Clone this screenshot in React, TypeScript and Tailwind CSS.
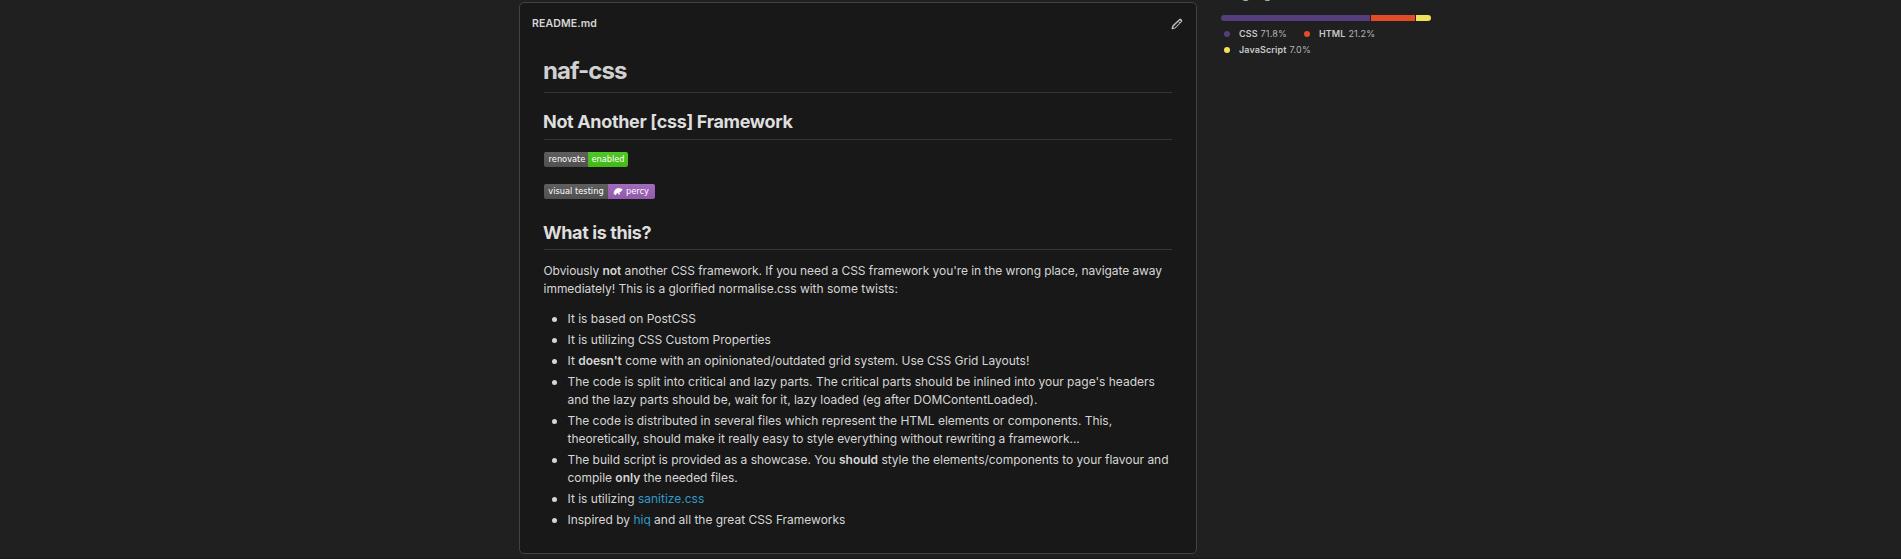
import type { ReactNode } from 'react';

function Heading({ children, className }: { children: ReactNode; className: string }) {
  return (
    <div className={`border-b border-[#353535] font-bold ${className}`}>
      <span className="-ml-px">{children}</span>
    </div>
  );
}

function Item({ children, className = '' }: { children: ReactNode; className?: string }) {
  return (
    <li className={`relative mb-[3px] whitespace-nowrap ${className}`}>
      <span className="absolute -left-[15.5px] top-[7px] size-[5px] rounded-full bg-[#d6d6d6]" />
      {children}
    </li>
  );
}

function Language({ name, share, dot }: { name: string; share: string; dot: string }) {
  return (
    <li className="flex h-4 items-center whitespace-nowrap">
      <span className={`mr-[9px] size-[6px] rounded-full ${dot}`} />
      <span className="font-semibold tracking-[0.09px] text-[#c9c9c9]">{name}</span>
      <span className="ml-[3px] tracking-[0.16px] text-[#b5b5b5]">{share}</span>
    </li>
  );
}

export default function App() {
  return (
    <div className="flex h-[559px] w-full overflow-hidden border-b border-[#191919] bg-[#202020] pl-[519px] font-[Inter,sans-serif] text-xs leading-[18px] text-[#d6d6d6]">
      <main className="mt-[2px] h-[552px] w-[678px] shrink-0 rounded-[5px] border border-[#424242] bg-[#181818]">
        <header className="flex h-[40px] items-center justify-between pl-[12px] pr-[13px]">
          <span className="pt-[2px] text-[10.5px] font-semibold tracking-[0.12px]">README.md</span>
          <svg className="mt-px size-3" viewBox="0 0 16 16" fill="#bdbdbd">
            <path d="M11.013 1.427a1.75 1.75 0 0 1 2.474 0l1.086 1.086a1.75 1.75 0 0 1 0 2.474l-8.61 8.61c-.21.21-.47.364-.756.445l-3.251.93a1 1 0 0 1-1.177-1.178l.929-3.25c.081-.286.235-.547.445-.758l8.86-8.36Zm.8 1.45L3.7 11l-.7 2.2 2.3-.7 8.1-8.2-1.587-1.423ZM9.6 3.5l2.9 2.9-.8.8-2.9-2.9Z" />
          </svg>
        </header>
        <article className="px-6">
          <Heading className="mt-[13px] h-[37px] text-2xl leading-[30px] tracking-[-0.95px] text-[#d0d0d0]">naf-css</Heading>
          <Heading className="mt-[18px] h-[29px] text-lg leading-[22px] tracking-[-0.34px] text-[#dedede]">Not Another [css] Framework</Heading>
          <div className="mt-3 flex h-[15px] w-[84px] overflow-hidden rounded-[2px] font-['DejaVu_Sans',sans-serif] text-[8.25px] leading-[15px] text-white">
            <span className="w-[44px] bg-linear-to-b from-[#5f5f5f] to-[#505050] pl-[2px] text-center">renovate</span>
            <span className="w-[40px] bg-linear-to-b from-[#4fc926] to-[#42b715] text-center">enabled</span>
          </div>
          <div className="mt-[17px] flex h-[15px] w-[111px] overflow-hidden rounded-[2px] font-['DejaVu_Sans',sans-serif] text-[8.25px] leading-[15px] text-white">
            <span className="w-[64px] bg-linear-to-b from-[#5f5f5f] to-[#505050] text-center">visual testing</span>
            <span className="flex w-[47px] items-center bg-linear-to-b from-[#a26bbb] to-[#915aaa] pl-[5px]">
              <svg className="mr-[3px] h-[9px] w-[10px]" viewBox="0 0 20 18" fill="white">
                <path d="M1 15L2 9C4 4 8 2 12 2L15 3C18 2 20 5 18 7L15 10H13L14 15H11L10 12L7 13L6 16H3L4 13Z" />
              </svg>
              percy
            </span>
          </div>
          <Heading className="mt-[22px] h-[29px] text-lg leading-[24px] tracking-[-0.4px] text-[#dedede]">What is this?</Heading>
          <p className="-ml-[0.5px] mt-3 whitespace-nowrap">
            <span className="tracking-[-0.067px]">Obviously <b className="font-semibold">not</b> another CSS framework. If you need a CSS framework you're in the wrong place, navigate away</span><br />
            <span className="tracking-[-0.02px]">immediately! This is a glorified normalise.css with some twists:</span>
          </p>
          <ul className="-ml-[0.5px] mt-3 pl-6">
            <Item>It is based on PostCSS</Item>
            <Item>It is utilizing CSS Custom Properties</Item>
            <Item className="tracking-[-0.018px]">It <b className="font-semibold">doesn't</b> come with an opinionated/outdated grid system. Use CSS Grid Layouts!</Item>
            <Item className="tracking-[-0.01px]">The code is split into critical and lazy parts. The critical parts should be inlined into your page's headers<br />and the lazy parts should be, wait for it, lazy loaded (eg after DOMContentLoaded).</Item>
            <Item className="tracking-[-0.025px]">The code is distributed in several files which represent the HTML elements or components. This,<br />theoretically, should make it really easy to style everything without rewriting a framework...</Item>
            <Item className="tracking-[-0.03px]">The build script is provided as a showcase. You <b className="font-semibold">should</b> style the elements/components to your flavour and<br />compile <b className="font-semibold">only</b> the needed files.</Item>
            <Item>It is utilizing <a className="text-[#2f9bc8]">sanitize.css</a></Item>
            <Item className="tracking-[-0.02px]">Inspired by <a className="text-[#2f9bc8]">hiq</a> and all the great CSS Frameworks</Item>
          </ul>
        </article>
      </main>
      <aside className="ml-6 w-[210px] text-[9px]">
        <h2 className="-mt-[14px] h-[29px] text-xs font-semibold leading-[15px] text-[#a9a9a9]">Languages</h2>
        <div className="flex h-[6px] gap-px overflow-hidden rounded-full">
          <span className="w-[149px] bg-[#563d7c]" />
          <span className="w-[44px] bg-[#e34c26]" />
          <span className="flex-1 bg-[#f1e05a]" />
        </div>
        <ul className="mt-[5px] flex flex-wrap gap-x-[17px] pl-[3px]">
          <Language name="CSS" share="71.8%" dot="bg-[#563d7c]" />
          <Language name="HTML" share="21.2%" dot="bg-[#e34c26]" />
          <Language name="JavaScript" share="7.0%" dot="bg-[#f1e05a]" />
        </ul>
      </aside>
    </div>
  );
}
